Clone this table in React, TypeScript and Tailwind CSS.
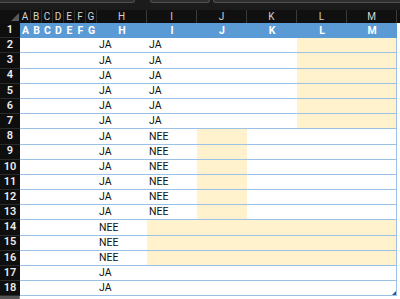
import React from 'react';

const LETTERS = ['A', 'B', 'C', 'D', 'E', 'F', 'G'];
const WIDE = ['H', 'I', 'J', 'K', 'L', 'M'];

type Row = { n: number; h: string; i: string; fill: string[] };

// which wide columns carry the yellow fill
const ROWS: Row[] = [
  ...[2, 3, 4, 5, 6, 7].map((n) => ({ n, h: 'JA', i: 'JA', fill: ['L', 'M'] })),
  ...[8, 9, 10, 11, 12, 13].map((n) => ({ n, h: 'JA', i: 'NEE', fill: ['J'] })),
  ...[14, 15, 16].map((n) => ({ n, h: 'NEE', i: '', fill: ['I', 'J', 'K', 'L', 'M'] })),
  ...[17, 18].map((n) => ({ n, h: 'JA', i: '', fill: [] as string[] })),
];

const font = "font-['Roboto',_'Liberation_Sans',_sans-serif]";

function RowHead({ n }: { n: number }) {
  return (
    <div className="w-[20px] shrink-0 h-full flex items-center justify-center bg-[#0e0e0e] border-b border-[#2a2a2a] text-[11px] font-semibold text-[#ececec]">
      {n}
    </div>
  );
}

export default function App() {
  return (
    <div className={`w-[400px] h-[299px] overflow-hidden bg-white ${font}`}>
      {/* top strip with the bottoms of name box / formula bar */}
      <div className="h-[10px] bg-[#1b1b1b] flex items-start">
        <div className="w-[135px] h-[3px] bg-[#2e2e2e] border-b border-r border-[#505050] rounded-br-[3px]" />
        <div className="w-[60px] h-[3px] ml-[15px] bg-[#2e2e2e] border-b border-l border-r border-[#505050] rounded-b-[3px]" />
        <div className="flex-1 h-[3px] ml-[3px] bg-[#2e2e2e] border-b border-l border-[#505050] rounded-bl-[3px]" />
      </div>

      {/* column letters */}
      <div className="h-[13px] flex bg-[#101010] text-[10px] text-[#d2d2d2]">
        <div className="w-[20px] shrink-0 relative">
          <svg className="absolute left-[11px] top-[3px]" width="8" height="8" viewBox="0 0 8 8">
            <polygon points="0,8 8,8 8,0" fill="#5a5a5a" />
          </svg>
        </div>
        {LETTERS.map((l) => (
          <div key={l} className="w-[11px] shrink-0 flex items-center justify-center border-r border-[#2e2e2e]">
            {l}
          </div>
        ))}
        {WIDE.map((l) => (
          <div key={l} className="w-[50px] shrink-0 flex items-center justify-center border-r border-[#3a3a3a]">
            {l}
          </div>
        ))}
      </div>

      {/* table header row */}
      <div className="h-[15.2px] flex">
        <RowHead n={1} />
        <div className="flex bg-[#5b9bd5] text-[10.5px] font-bold text-white">
          {LETTERS.map((l) => (
            <div key={l} className="w-[11px] shrink-0 flex items-center justify-center">
              {l}
            </div>
          ))}
          {WIDE.map((l) => (
            <div key={l} className="w-[50px] shrink-0 flex items-center justify-center">
              {l}
            </div>
          ))}
        </div>
      </div>

      {ROWS.map((r) => (
        <div key={r.n} className="h-[15.2px] flex">
          <RowHead n={r.n} />
          <div className="w-[77px] shrink-0 h-full border-b border-[#9bc2e6]" />
          {WIDE.map((c) => (
            <div
              key={c}
              className={`w-[50px] shrink-0 h-full flex items-center pl-[2px] border-b border-[#9bc2e6] text-[10.5px] text-[#111] relative ${
                r.fill.includes(c) ? 'bg-[#fff2cc]' : 'bg-white'
              } ${c === 'M' ? 'border-r border-r-[#9bc2e6]' : ''}`}
            >
              {c === 'H' ? r.h : c === 'I' ? r.i : ''}
              {c === 'M' && r.n === 18 && (
                <svg className="absolute right-0 bottom-0" width="4" height="4" viewBox="0 0 4 4">
                  <polygon points="0,4 4,4 4,0" fill="#2f5597" />
                </svg>
              )}
            </div>
          ))}
        </div>
      ))}

      <div className="h-[4px] flex">
        <div className="w-[20px] shrink-0 h-full bg-[#555] border-r border-[#3fa34d]" />
      </div>
    </div>
  );
}
